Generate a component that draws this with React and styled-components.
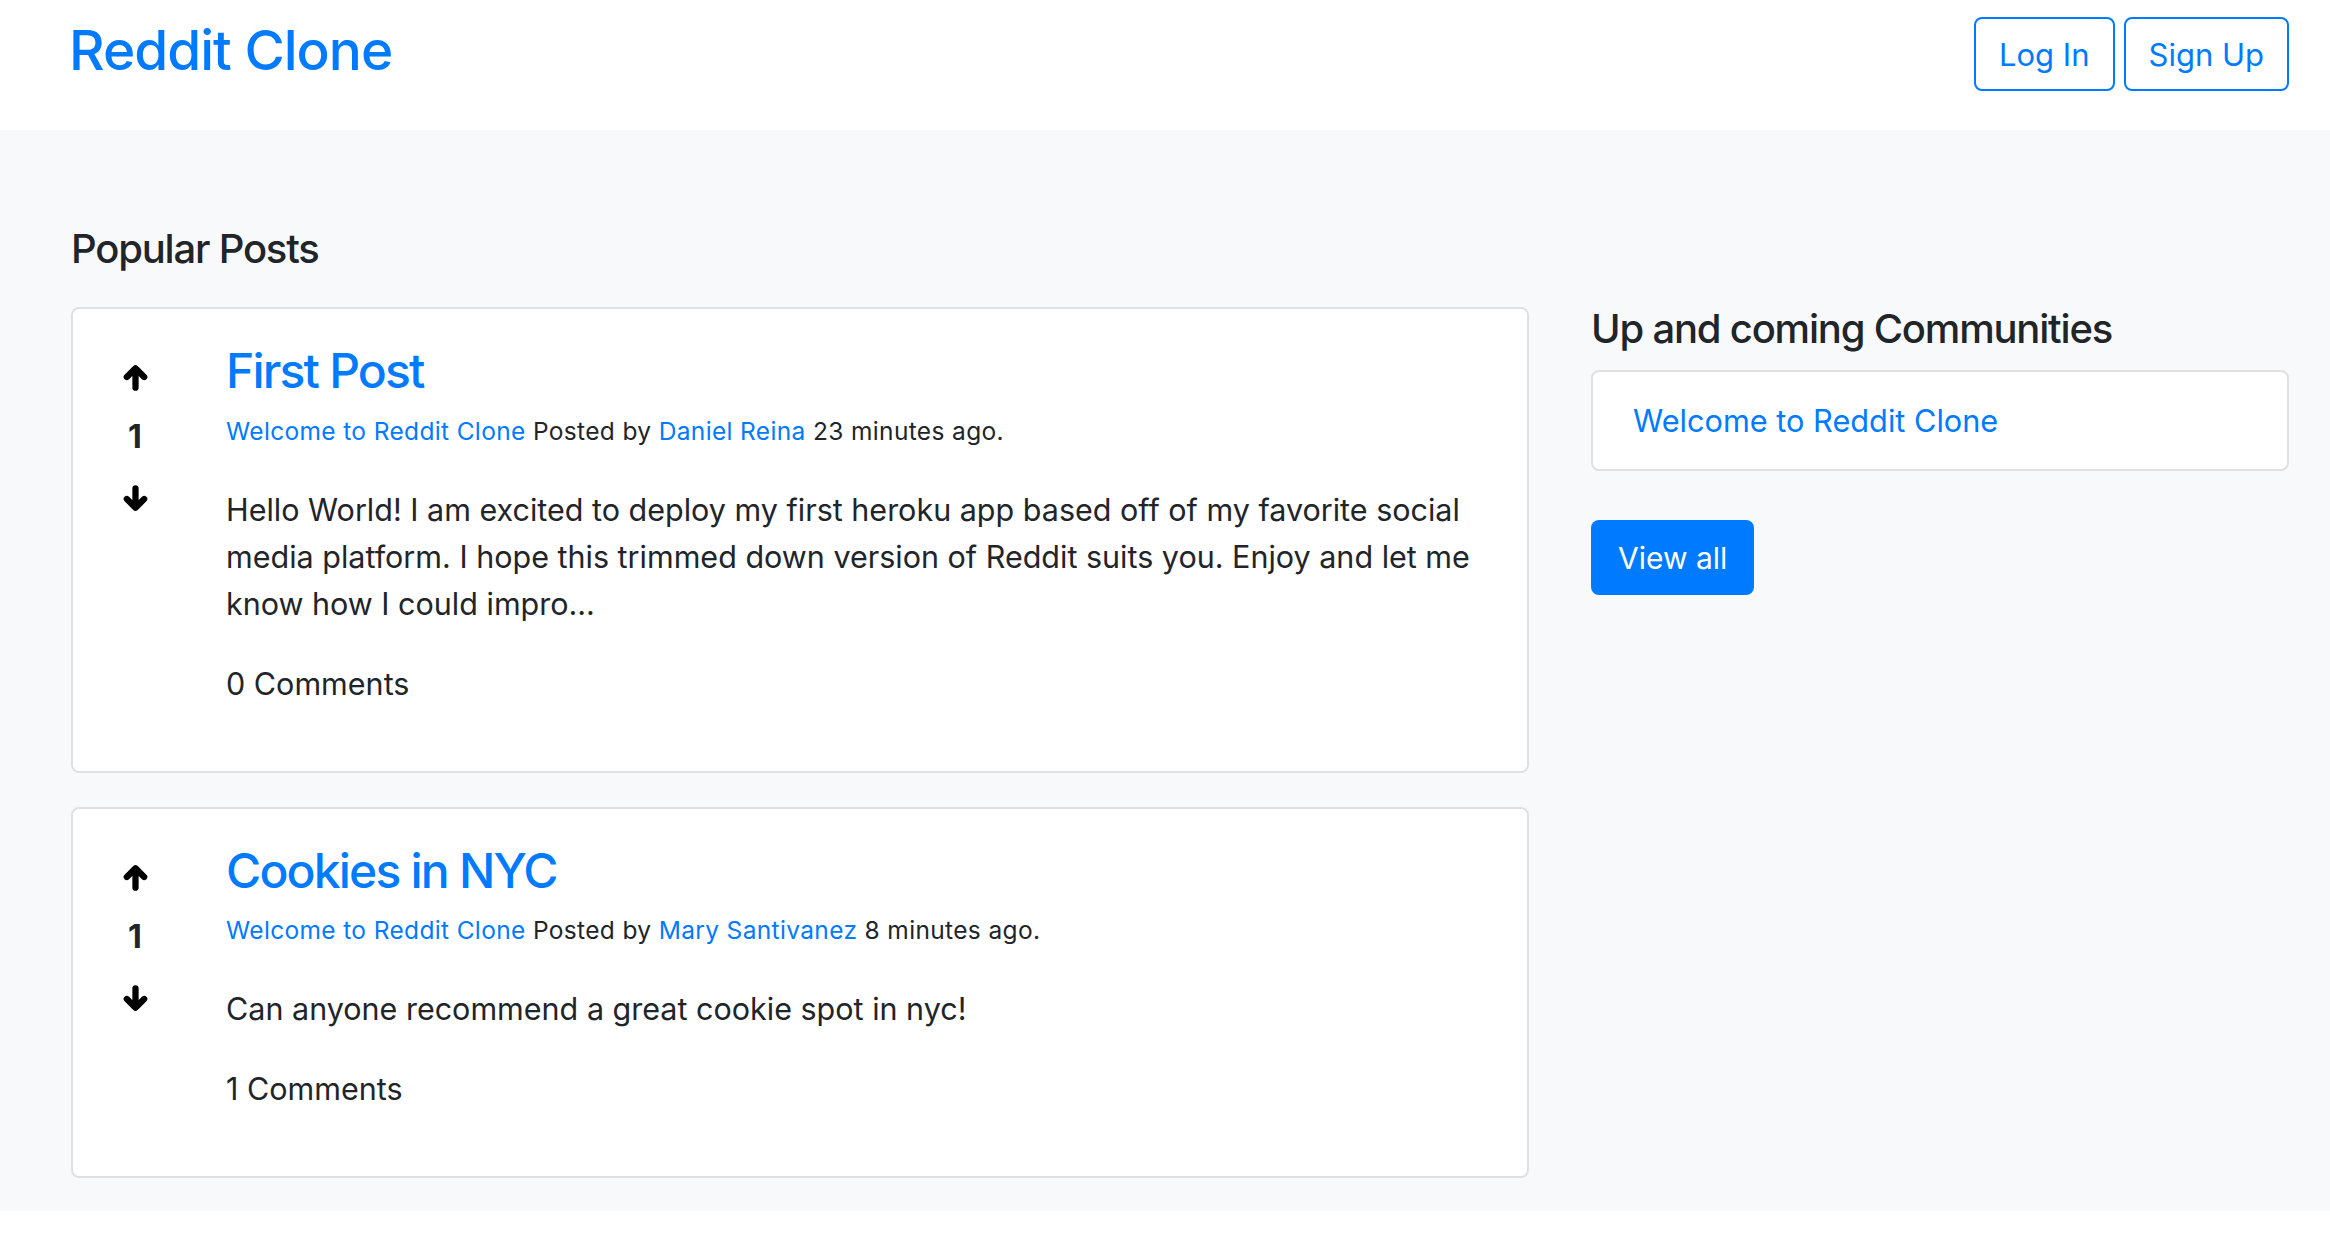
import React from "react";
import styled, { createGlobalStyle } from "styled-components";

const GlobalStyle = createGlobalStyle`
  html, body {
    margin: 0;
    padding: 0;
    background: #fff;
    font-family: Inter, "Noto Sans", "Liberation Sans", sans-serif;
    color: #212529;
  }
  * { box-sizing: border-box; }
`;

const posts = [
  {
    id: 1,
    title: "First Post",
    community: "Welcome to Reddit Clone",
    author: "Daniel Reina",
    ago: "23 minutes ago.",
    body:
      "Hello World! I am excited to deploy my first heroku app based off of my favorite social media platform. I hope this trimmed down version of Reddit suits you. Enjoy and let me know how I could impro...",
    votes: 1,
    comments: 0,
  },
  {
    id: 2,
    title: "Cookies in NYC",
    community: "Welcome to Reddit Clone",
    author: "Mary Santivanez",
    ago: "8 minutes ago.",
    body: "Can anyone recommend a great cookie spot in nyc!",
    votes: 1,
    comments: 1,
  },
];

const Arrow = ({ down }) => (
  <ArrowIcon viewBox="0 0 28 28" $down={down}>
    <path
      d="M14 24.5V5M5 13.5L14 4.5L23 13.5"
      stroke="#000"
      strokeWidth="6.5"
      strokeLinecap="round"
      strokeLinejoin="round"
      fill="none"
    />
  </ArrowIcon>
);

export default function App() {
  return (
    <>
      <GlobalStyle />
      <Header>
        <Brand href="#">Reddit Clone</Brand>
        <Auth>
          <OutlineButton>Log In</OutlineButton>
          <OutlineButton>Sign Up</OutlineButton>
        </Auth>
      </Header>
      <Main>
        <PostsColumn>
          <SectionTitle>Popular Posts</SectionTitle>
          {posts.map((p) => (
            <Card key={p.id}>
              <Votes>
                <Arrow />
                <Count>{p.votes}</Count>
                <Arrow down />
              </Votes>
              <PostBody>
                <PostTitle href="#">{p.title}</PostTitle>
                <Meta>
                  <Link href="#">{p.community}</Link> Posted by{" "}
                  <Link href="#">{p.author}</Link> {p.ago}
                </Meta>
                <Text>{p.body}</Text>
                <Comments>{p.comments} Comments</Comments>
              </PostBody>
            </Card>
          ))}
        </PostsColumn>
        <Sidebar>
          <SectionTitle>Up and coming Communities</SectionTitle>
          <ListBox>
            <CommunityLink href="#">Welcome to Reddit Clone</CommunityLink>
          </ListBox>
          <PrimaryButton>View all</PrimaryButton>
        </Sidebar>
      </Main>
    </>
  );
}

const Header = styled.header`
  height: 130px;
  background: #fff;
  display: flex;
  justify-content: space-between;
  align-items: flex-start;
  padding: 17px 41px 0 69px;
`;

const Brand = styled.a`
  font-size: 55px;
  font-weight: 500;
  line-height: 1.2;
  letter-spacing: -1px;
  color: #007bff;
  text-decoration: none;
`;

const Auth = styled.div`
  display: flex;
  gap: 9px;
`;

const OutlineButton = styled.button`
  height: 74px;
  padding: 0 23px;
  font-family: inherit;
  font-size: 31px;
  color: #007bff;
  background: transparent;
  border: 2px solid #007bff;
  border-radius: 8px;
  cursor: pointer;
`;

const Main = styled.main`
  background: #f8f9fa;
  display: grid;
  grid-template-columns: 1458px 698px;
  column-gap: 62px;
  align-items: start;
  padding: 95px 41px 33px 71px;
`;

const PostsColumn = styled.section`
  display: flex;
  flex-direction: column;
  gap: 34px;
`;

const SectionTitle = styled.h3`
  margin: 0;
  font-size: 40px;
  font-weight: 500;
  line-height: 48px;
  letter-spacing: -1.2px;
  color: #212529;
`;

const Card = styled.article`
  background: #fff;
  border: 2px solid #e0e0e0;
  border-radius: 8px;
  display: grid;
  grid-template-columns: 64px 1fr;
  column-gap: 59px;
  padding: 31px 20px 64px 30px;
`;

const Votes = styled.div`
  display: flex;
  flex-direction: column;
  align-items: center;
  padding-top: 24px;
  gap: 22px;
`;

const ArrowIcon = styled.svg`
  width: 27px;
  height: 27px;
  transform: ${(p) => (p.$down ? "rotate(180deg)" : "none")};
  &:last-child {
    margin-top: 2px;
  }
`;

const Count = styled.span`
  font-size: 32px;
  font-weight: 700;
  line-height: 48px;
  color: #212529;
`;

const PostBody = styled.div`
  display: flex;
  flex-direction: column;
  align-items: flex-start;
`;

const PostTitle = styled.a`
  font-size: 48px;
  font-weight: 500;
  line-height: 57.6px;
  letter-spacing: -1.8px;
  color: #007bff;
  text-decoration: none;
  margin-top: 2px;
`;

const Meta = styled.div`
  font-size: 24.5px;
  line-height: 37px;
  letter-spacing: 0.35px;
  margin-top: 13px;
`;

const Link = styled.a`
  color: #007bff;
  text-decoration: none;
`;

const Text = styled.p`
  margin: 36px 0 0;
  font-size: 30.5px;
  line-height: 47px;
`;

const Comments = styled.p`
  margin: 33px 0 0;
  font-size: 30.5px;
  line-height: 47px;
`;

const Sidebar = styled.aside`
  padding-top: 80px;
  display: flex;
  flex-direction: column;
  align-items: flex-start;
`;

const ListBox = styled.div`
  align-self: stretch;
  margin-top: 17px;
  background: #fff;
  border: 2px solid #e0e0e0;
  border-radius: 8px;
  padding: 26px 40px 25px;
`;

const CommunityLink = styled.a`
  font-size: 30.7px;
  line-height: 46px;
  color: #007bff;
  text-decoration: none;
`;

const PrimaryButton = styled.button`
  margin-top: 49px;
  height: 75px;
  padding: 0 27px;
  font-family: inherit;
  font-size: 30px;
  color: #fff;
  background: #007bff;
  border: none;
  border-radius: 8px;
  cursor: pointer;
`;
